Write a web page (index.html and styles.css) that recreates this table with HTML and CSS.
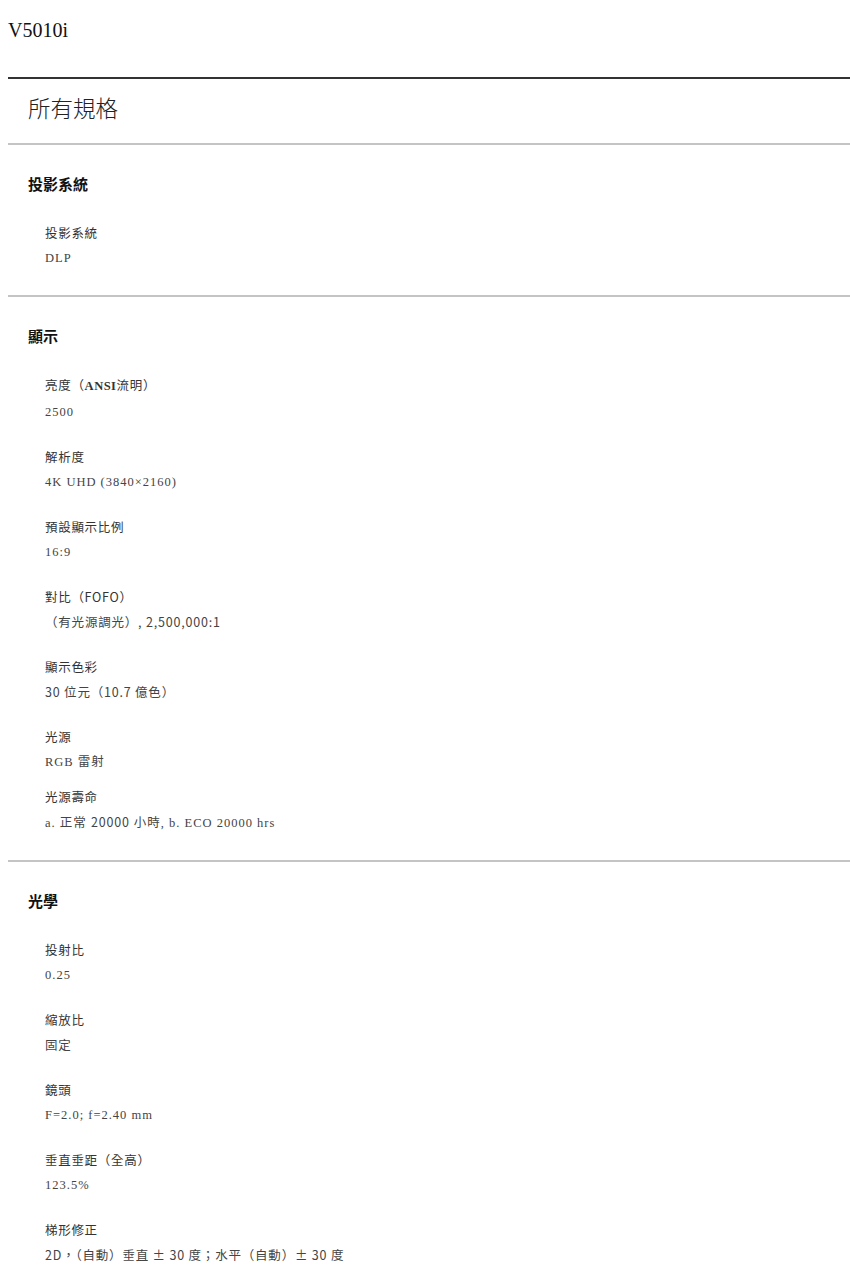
FILE: index.html
```html
<!DOCTYPE html>
<html lang="zh-Hant">
<head>
  <meta charset="UTF-8">
  <meta name="viewport" content="width=device-width, initial-scale=1.0">
  <title>V5010i 規格</title>
  <link rel="stylesheet" href="styles.css">
</head>
<body>
  <h1 class="model">V5010i</h1>

  <section class="spec_page">
    <h2 class="spec_title">所有規格</h2>

    <div class="spec_group">
      <h3>投影系統</h3>
      <dl class="spec_list">
        <div class="spec_item"><dt>投影系統</dt><dd>DLP</dd></div>
      </dl>
    </div>

    <div class="spec_group">
      <h3>顯示</h3>
      <dl class="spec_list">
        <div class="spec_item"><dt>亮度（<span class="serif">ANSI</span>流明）</dt><dd>2500</dd></div>
        <div class="spec_item"><dt>解析度</dt><dd>4K UHD (3840×2160)</dd></div>
        <div class="spec_item"><dt>預設顯示比例</dt><dd>16:9</dd></div>
        <div class="spec_item"><dt>對比（FOFO）</dt><dd class="sans">（有光源調光）, 2,500,000:1</dd></div>
        <div class="spec_item"><dt>顯示色彩</dt><dd class="sans">30 位元（10.7 億色）</dd></div>
        <div class="spec_item tight"><dt>光源</dt><dd>RGB 雷射</dd></div>
        <div class="spec_item"><dt>光源壽命</dt><dd>a. 正常 <span class="sans">20000</span> 小時, b. ECO 20000 hrs</dd></div>
      </dl>
    </div>

    <div class="spec_group">
      <h3>光學</h3>
      <dl class="spec_list">
        <div class="spec_item"><dt>投射比</dt><dd>0.25</dd></div>
        <div class="spec_item"><dt>縮放比</dt><dd class="sans">固定</dd></div>
        <div class="spec_item"><dt>鏡頭</dt><dd>F=2.0; f=2.40 mm</dd></div>
        <div class="spec_item"><dt>垂直垂距（全高）</dt><dd>123.5%</dd></div>
        <div class="spec_item"><dt>梯形修正</dt><dd class="sans">2D，（自動）垂直 ± 30 度；水平（自動）± 30 度</dd></div>
      </dl>
    </div>
  </section>
</body>
</html>
```

FILE: styles.css
```css
body {
  margin: 0;
  padding: 0 0 0 8px;
  background: #fff;
  color: #222;
  font-family: "Noto Sans CJK TC", "Noto Sans", sans-serif;
}
.model {
  font-family: "Liberation Serif", "Noto Sans CJK TC", serif;
  font-size: 20px;
  font-weight: normal;
  color: #111;
  margin: 0;
  padding-top: 19px;
  height: 77px;
  box-sizing: border-box;
  line-height: 22px;
}
.spec_page {
  border-top: 2px solid #333;
}
.spec_title {
  margin: 0;
  padding: 0 20px;
  height: 64px;
  line-height: 57px;
  font-size: 22.5px;
  font-weight: 300;
  color: #222;
  border-bottom: 2px solid #c4c4c4;
}
.spec_group {
  padding: 21px 20px 24px;
  border-bottom: 2px solid #c4c4c4;
}
.spec_group:last-child {
  border-bottom: none;
}
.spec_group h3 {
  margin: 0;
  font-size: 15px;
  font-weight: bold;
  line-height: 36px;
  color: #111;
}
.spec_list {
  margin: 18px 0 0;
  padding-left: 17px;
  display: flex;
  flex-direction: column;
  gap: 19px;
}
.spec_item.tight {
  margin-bottom: -10px;
}
.spec_item dt {
  font-size: 12.5px;
  line-height: 25px;
  color: #333;
  letter-spacing: 0.7px;
}
.spec_item dd {
  margin: 0;
  font-family: "Liberation Serif", "Noto Sans CJK TC", serif;
  font-size: 12.5px;
  line-height: 26px;
  color: #444;
  letter-spacing: 1px;
}
.spec_item .serif {
  font-family: "Liberation Serif", serif;
  font-weight: bold;
  letter-spacing: 0.5px;
}
.spec_item dd.sans,
.spec_item .sans {
  font-family: "Noto Sans CJK TC", "Noto Sans", sans-serif;
  letter-spacing: 0.8px;
}
```
